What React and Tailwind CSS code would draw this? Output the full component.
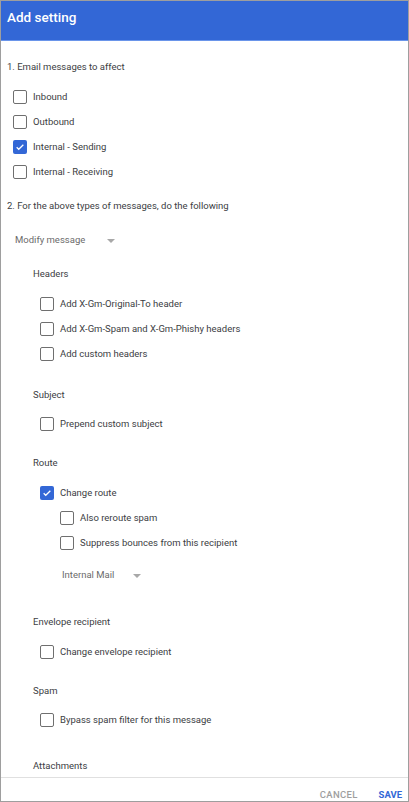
const font = { fontFamily: "Roboto, 'Liberation Sans', sans-serif" };

function Box({ checked }) {
  if (checked) {
    return (
      <span className="flex h-[14px] w-[14px] shrink-0 items-center justify-center rounded-[2px] bg-[#3367d6]">
        <svg width="10" height="10" viewBox="0 0 24 24" fill="none">
          <path d="M4 12.5l5 5L20 6.5" stroke="#fff" strokeWidth="3" />
        </svg>
      </span>
    );
  }
  return <span className="h-[14px] w-[14px] shrink-0 rounded-[2px] border-[1.5px] border-[#6f6f6f] bg-white" />;
}

function Check({ label, checked, indent, mt }) {
  return (
    <div className={`flex h-[25px] items-center gap-[6px] pt-[1px] ${indent} ${mt || ""}`}>
      <Box checked={checked} />
      <span className="text-[9.5px] text-[#3c4043]">{label}</span>
    </div>
  );
}

function Label({ children, className }) {
  return <div className={`flex h-[20px] items-center pt-[1px] text-[9.5px] text-[#3c4043] ${className}`}>{children}</div>;
}

function Select({ label, className, gap }) {
  return (
    <div className={`flex h-[20px] items-center pt-[1px] text-[9.5px] text-[#6b6b6b] ${className}`}>
      <span>{label}</span>
      <svg width="8" height="4" viewBox="0 0 8 4" className={gap}>
        <path d="M0 0h8L4 4z" fill="#a8a8a8" />
      </svg>
    </div>
  );
}

export default function App() {
  return (
    <div style={font} className="flex h-[802px] w-[409px] flex-col overflow-hidden border border-[#9e9e9e] bg-white">
      <div className="flex h-[40px] shrink-0 items-center border-b border-[#6a95ea] bg-[#3367d6] px-[6px] pb-[6px]">
        <span className="text-[13.5px] font-medium text-white">Add setting</span>
      </div>
      <div className="flex flex-1 flex-col overflow-hidden">
        <Label className="mt-[16px] pl-[6px]">1. Email messages to affect</Label>
        <div className="mt-[7px] flex flex-col">
          <Check label="Inbound" indent="pl-[12px]" />
          <Check label="Outbound" indent="pl-[12px]" />
          <Check label="Internal - Sending" checked indent="pl-[12px]" />
          <Check label="Internal - Receiving" indent="pl-[12px]" />
        </div>
        <Label className="mt-[12px] pl-[6px]">2. For the above types of messages, do the following</Label>
        <Select label="Modify message" className="mt-[14px] pl-[14px]" gap="ml-[22px]" />

        <Label className="mt-[14px] pl-[32px]">Headers</Label>
        <div className="mt-[7px] flex flex-col">
          <Check label="Add X-Gm-Original-To header" indent="pl-[39px]" />
          <Check label="Add X-Gm-Spam and X-Gm-Phishy headers" indent="pl-[39px]" />
          <Check label="Add custom headers" indent="pl-[39px]" />
        </div>

        <Label className="mt-[19px] pl-[32px]">Subject</Label>
        <Check label="Prepend custom subject" indent="pl-[39px]" mt="mt-[6px]" />

        <Label className="mt-[17px] pl-[32px]">Route</Label>
        <Check label="Change route" checked indent="pl-[39px]" mt="mt-[7px]" />
        <Check label="Also reroute spam" indent="pl-[59px]" />
        <Check label="Suppress bounces from this recipient" indent="pl-[59px]" />
        <Select label="Internal Mail" className="mt-[10px] pl-[61px]" gap="ml-[19px]" />

        <Label className="mt-[27px] pl-[32px]">Envelope recipient</Label>
        <Check label="Change envelope recipient" indent="pl-[39px]" mt="mt-[7px]" />

        <Label className="mt-[17px] pl-[32px]">Spam</Label>
        <Check label="Bypass spam filter for this message" indent="pl-[39px]" mt="mt-[6px]" />

        <Label className="mt-[24px] pl-[32px]">Attachments</Label>
      </div>
      <div className="flex h-[24px] shrink-0 items-center justify-end gap-[21px] border-t border-[#e0e0e0] pr-[6px] pt-[12px]">
        <span className="text-[9.5px] font-medium tracking-[0.3px] text-[#9e9e9e]">CANCEL</span>
        <span className="text-[9.5px] font-bold text-[#3367d6]">SAVE</span>
      </div>
    </div>
  );
}
